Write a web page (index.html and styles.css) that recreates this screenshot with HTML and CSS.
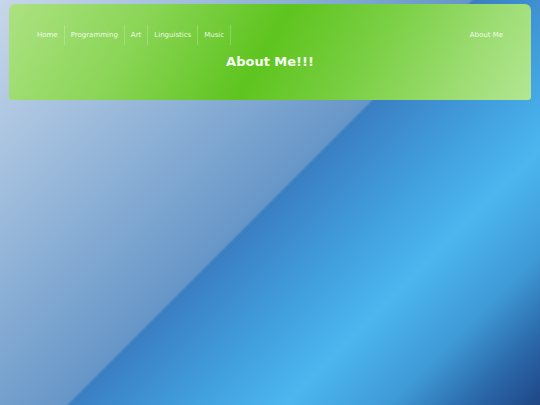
FILE: index.html
```html
<!DOCTYPE html>
<html lang="en">
<head>
<meta charset="utf-8">
<title>About Me!!!</title>
<link rel="stylesheet" href="styles.css">
</head>
<body>
<header class="banner">
  <nav class="nav">
    <ul class="nav-list">
      <li class="nav-item"><a href="#">Home</a></li>
      <li class="nav-item"><a href="#">Programming</a></li>
      <li class="nav-item"><a href="#">Art</a></li>
      <li class="nav-item"><a href="#">Linguistics</a></li>
      <li class="nav-item"><a href="#">Music</a></li>
    </ul>
    <ul class="nav-list">
      <li class="nav-item nav-item-plain"><a href="#">About Me</a></li>
    </ul>
  </nav>
  <h1 class="title">About Me!!!</h1>
</header>
</body>
</html>
```

FILE: styles.css
```css
html, body {
  margin: 0;
  padding: 0;
  height: 100%;
}

body {
  font-family: "DejaVu Sans", Verdana, sans-serif;
  background: linear-gradient(135deg,
    #c8d7ea 0%,
    #98b8da 25%,
    #6696c8 49.8%,
    #3a7fc3 50.2%,
    #42a2e0 64%,
    #4cb6ef 73%,
    #3f9ad6 84%,
    #2a66a8 93%,
    #1f4684 100%);
  min-height: 405px;
  padding: 4px 9px 0;
  box-sizing: border-box;
}

.banner {
  background: linear-gradient(120deg,
    #ace282 0%,
    #8ad556 25%,
    #5ec41e 49%,
    #7bd045 68%,
    #9bdc70 85%,
    #b3e693 100%);
  border-radius: 6px 6px 3px 3px;
  padding: 21px 22px 30px;
  height: 96px;
  box-sizing: border-box;
}

.nav {
  display: flex;
  justify-content: space-between;
  align-items: center;
}

.nav-list {
  display: flex;
  list-style: none;
  margin: 0;
  padding: 0;
}

.nav-item {
  border-right: 1px solid rgba(255, 255, 255, 0.22);
}

.nav-item-plain {
  border-right: none;
}

.nav-item a {
  display: block;
  padding: 0 6px;
  line-height: 20px;
  font-size: 7px;
  color: rgba(255, 255, 255, 0.9);
  text-decoration: none;
}

.title {
  margin: 9px 0 0;
  text-align: center;
  font-size: 13px;
  line-height: 16px;
  font-weight: bold;
  color: #f5fcf0;
}
```
